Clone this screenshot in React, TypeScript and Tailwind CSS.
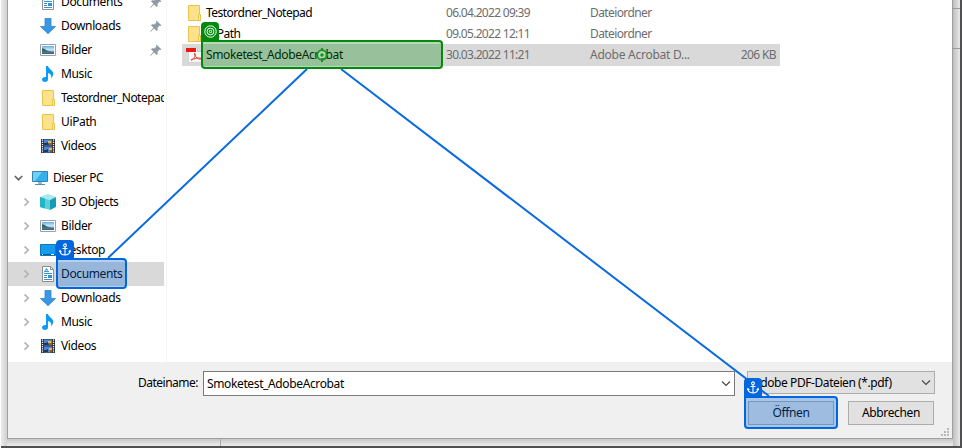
import type { ReactNode } from 'react';

const Folder = () => (
  <svg width="16" height="18" viewBox="0 0 16 18" className="shrink-0">
    <path d="M2.5 1.5h11v9h1v6h-12z" fill="#fde28b" stroke="#e9c44d" />
    <path d="M12.5 16.5v-6h2v6z" fill="#ffeaa0" stroke="#e9c44d" />
  </svg>
);
const Doc = () => (
  <svg width="16" height="16" viewBox="0 0 16 16" className="shrink-0">
    <path d="M2.5.5h8l3 3v12h-11z" fill="#fff" stroke="#8a8f91" />
    <path d="M10.5.5v3h3" fill="none" stroke="#8a8f91" />
    <path d="M5.500 3.500h2M5 5.500h4M4 7.500h8M4 9.500h3M4 13.500h8" stroke="#2f93d6" />
    <path d="m4 6.500 2.500-4L8 6.500" fill="none" stroke="#4ba3dc" />
    <path d="M8 9h4v3H8z" fill="#3a8fca" />
    <path d="M4 11.500h3" stroke="#777" />
  </svg>
);
const Download = () => (
  <svg width="16" height="16" viewBox="0 0 16 16" className="shrink-0">
    <path d="M5 .5h6v8h4.500L8 15.700.5 8.500H5z" fill="#3997e5" stroke="#2d83cf" strokeWidth=".8" />
  </svg>
);
const Picture = () => (
  <svg width="16" height="16" viewBox="0 0 16 16" className="shrink-0">
    <defs>
      <linearGradient id="sky" x1="0" y1="0" x2="0" y2="1">
        <stop offset="0" stopColor="#65a9ec" />
        <stop offset=".5" stopColor="#d6edf4" />
        <stop offset=".75" stopColor="#4f7f9e" />
        <stop offset="1" stopColor="#315b86" />
      </linearGradient>
    </defs>
    <path d="M.5 2.500h15v11H.5z" fill="#fff" stroke="#a0a0a0" />
    <path d="M2 4h12v8H2z" fill="url(#sky)" />
    <path d="M2 6q3 .5 5 2.500l5 1.300H2z" fill="#326a60" />
  </svg>
);
const Music = () => (
  <svg width="16" height="16" viewBox="0 0 16 16" className="shrink-0">
    <path d="M6 0h2c.5 3 5.300 4.300 5.300 7.500 0 1.700-.8 3.500-2.300 5 .8-3-.3-5-3-5.500v6.300C8 15.200 6.800 16 5 16s-3-1-3-2.500S3.400 11 5 11c.4 0 .7 0 1 .2z" fill="#0c9bf5" />
  </svg>
);
const Video = () => (
  <svg width="16" height="16" viewBox="0 0 16 16" className="shrink-0">
    <path d="M1 1h14v14H1z" fill="#303030" />
    <path d="M4 1.500h8v6H4zM4 8.500h8v6H4z" fill="#4b86dc" />
    <path d="M4 5h2l2-1 1 3H4zM4 12h2l2-1v3H4z" fill="#1f365e" />
    <path d="M8 3h3v2H8zM9 10h3v2H9z" fill="#e6c52b" />
    <path d="M10 5h2v2h-2zM10 12h2v2h-2z" fill="#a3552d" />
    <path d="M2.500 1.500v14M13.500 1.500v14" stroke="#fff" strokeWidth="1.200" strokeDasharray="1.200 1" />
  </svg>
);
const Monitor = () => (
  <svg width="16" height="16" viewBox="0 0 16 16" className="shrink-0">
    <path d="M.5 1.500h15v10H.5z" fill="#35b0ef" stroke="#3184ad" />
    <path d="M1 2h9L3 11H1z" fill="#73cef8" />
    <path d="M6 12h4v2H6z" fill="#9bb9c6" />
    <path d="M3 14.500h10" stroke="#5b8ea8" />
  </svg>
);
const Cube = () => (
  <svg width="16" height="16" viewBox="0 0 16 16" className="shrink-0">
    <path d="M0 3 8 0l8 3-6 3z" fill="#a4e9ee" />
    <path d="m0 3 10 3v10L0 13z" fill="#5fd0da" />
    <path d="m0 3 5 1.500v10L0 13z" fill="#24b4c8" />
    <path d="m10 6 6-3v10l-6 3z" fill="#159db4" />
  </svg>
);
const Desktop = () => (
  <svg width="16" height="16" viewBox="0 0 16 16" className="shrink-0">
    <path d="M.5 2.500h15v11H.5z" fill="#139bee" stroke="#0878bd" />
    <path d="M1 12.500h14" stroke="#075b93" />
    <path d="M2 12.500h1M11 12.500h3" stroke="#fff" />
  </svg>
);
const Pdf = () => (
  <svg width="16" height="18" viewBox="0 0 16 18" className="shrink-0">
    <path d="M2.500 1.500h9l4 4v11h-13z" fill="#f8f8f8" stroke="#d5d5d5" />
    <path d="M11.500 1.500v4h4" fill="#ddd" stroke="#c5c5c5" />
    <path d="M0 2h10v4H0z" fill="#e81b0c" />
    <path d="M5 14c4-1.500 5-5.500 4-6.500s-1 2 2 4.300 5 1.300 4 .5-7 .2-10 1.700" fill="none" stroke="#e23a2e" strokeWidth="1" />
  </svg>
);
const Pin = () => (
  <svg width="12" height="12" viewBox="0 0 12 12" className="shrink-0">
    <path d="m6.500.5 5 5-1.200.5-.8-.3-2 2 .2 2.300-1 .9-2.500-2.400L1 11.500l-.7.200.2-.7 3-3.200L1 5.300l1-1 2.400.2 2-2-.4-.8z" fill="#8f9ba3" />
  </svg>
);
const Chevron = ({ open }: { open?: boolean }) => (
  <svg width="10" height="10" viewBox="0 0 10 10" fill="none" className="shrink-0">
    {open ? (
      <path d="m.8 3 3.700 3.700L8.200 3" stroke="#686868" strokeWidth="1.700" />
    ) : (
      <path d="m2.500 1.300 3.700 3.700-3.700 3.700" stroke="#b3b3b3" strokeWidth="1.700" />
    )}
  </svg>
);
const Anchor = () => (
  <svg width="12" height="14" viewBox="0 0 12 14" fill="none" stroke="#fff" strokeWidth="1.100">
    <circle cx="6" cy="2.300" r="1.400" />
    <path d="M6 3.800V12M3.500 5.500h5M1 7.500v1C1 10.500 3.500 12 6 12s5-1.500 5-3.500v-1M.3 9 1 7.500 2.300 9M9.700 9 11 7.500l.7 1.500" />
  </svg>
);

type NavItem = { icon: ReactNode; label: string; narrow?: boolean; pinned?: boolean; selected?: boolean };

const quick: NavItem[] = [
  { icon: <Doc />, label: 'Documents', pinned: true },
  { icon: <Download />, label: 'Downloads', pinned: true },
  { icon: <Picture />, label: 'Bilder', pinned: true },
  { icon: <Music />, label: 'Music' },
  { icon: <Folder />, label: 'Testordner_Notepad', narrow: true },
  { icon: <Folder />, label: 'UiPath' },
  { icon: <Video />, label: 'Videos' },
];
const places: NavItem[] = [
  { icon: <Cube />, label: '3D Objects' },
  { icon: <Picture />, label: 'Bilder' },
  { icon: <Desktop />, label: 'Desktop' },
  { icon: <Doc />, label: 'Documents', selected: true },
  { icon: <Download />, label: 'Downloads' },
  { icon: <Music />, label: 'Music' },
  { icon: <Video />, label: 'Videos' },
];

function Sidebar() {
  return (
    <nav className="-mt-[10px] w-[156px] shrink-0 overflow-hidden">
      {quick.map((i) => (
        <div key={i.label} className="flex h-6 items-center pl-8">
          {i.icon}
          <span className={i.narrow ? 'ml-[5px] min-w-0 flex-1 overflow-hidden tracking-[-0.52px]' : 'ml-[5px] min-w-0 flex-1'}>{i.label}</span>
          {i.pinned && <span className="mr-[2px]"><Pin /></span>}
        </div>
      ))}
      <div className="mt-2 flex h-6 items-center pl-[6px]">
        <Chevron open />
        <span className="ml-2"><Monitor /></span>
        <span className="ml-[5px] tracking-[-0.44px]">Dieser PC</span>
      </div>
      {places.map((i) => (
        <div key={i.label} className={i.selected ? 'flex h-6 items-center bg-[#d9d9d9] pl-[14px]' : 'flex h-6 items-center pl-[14px]'}>
          <Chevron />
          <span className="ml-2">{i.icon}</span>
          <span className="ml-[5px]">{i.label}</span>
        </div>
      ))}
    </nav>
  );
}

const files = [
  { name: 'Testordner_Notepad', date: '06.04.2022 09:39', type: 'Dateiordner' },
  { name: 'UiPath', date: '09.05.2022 12:11', type: 'Dateiordner' },
  { name: 'Smoketest_AdobeAcrobat', date: '30.03.2022 11:21', type: 'Adobe Acrobat D...', size: '206 KB' },
];

function Files() {
  return (
    <main className="ml-[15px] w-[598px] pt-[2px]">
      {files.map((f) => (
        <div
          key={f.name}
          className={f.size ? 'flex h-[22px] items-center bg-[#d9d9d9] pr-1 pl-1' : 'flex h-[21px] items-center pr-1 pl-1'}
        >
          {f.size ? <Pdf /> : <Folder />}
          <span className={f.size ? 'ml-1 w-[240px]' : 'ml-1 w-[240px] tracking-[-0.52px]'}>{f.name}</span>
          <span className="w-36 tracking-[-0.7px] text-[#6d6d6d]">{f.date}</span>
          <span className={f.size ? 'flex-1 tracking-[-0.26px] text-[#6d6d6d]' : 'flex-1 tracking-[-0.6px] text-[#6d6d6d]'}>{f.type}</span>
          <span className="tracking-[-0.6px] text-[#6d6d6d]">{f.size}</span>
        </div>
      ))}
    </main>
  );
}

const DropArrow = () => (
  <svg width="10" height="6" viewBox="0 0 10 6" fill="none" stroke="#444" strokeWidth="1.100" className="shrink-0">
    <path d="M1 .5 5 4.500 9 .5" />
  </svg>
);

function Footer() {
  return (
    <footer className="relative flex h-[76px] bg-[#f0f0f0] pt-[9px]">
      <label className="ml-[130px] mt-[3px] w-[65px] tracking-[-0.5px]">Dateiname:</label>
      <div className="flex h-[25px] w-[532px] items-center justify-between border border-[#7a7a7a] bg-white pr-[3px] pl-[3px]">
        <span>Smoketest_AdobeAcrobat</span>
        <DropArrow />
      </div>
      <div className="ml-3 w-[188px]">
        <div className="flex h-[23px] items-center justify-between border border-[#adadad] bg-[#e1e1e1] pr-[3px] pl-[5px]">
          <span className="tracking-[-0.42px]">Adobe PDF-Dateien (*.pdf)</span>
          <DropArrow />
        </div>
        <div className="mt-[7px] flex justify-between pr-px pl-px">
          <div className="flex h-6 w-[86px] items-center justify-center border border-[#adadad] bg-[#e1e1e1]">Öffnen</div>
          <div className="flex h-6 w-[86px] items-center justify-center border border-[#adadad] bg-[#e1e1e1]">Abbrechen</div>
        </div>
      </div>
      <svg width="8" height="8" viewBox="0 0 8 8" className="absolute right-[3px] bottom-[2px]" fill="#b9b9b9">
        <path d="M6 0h2v2H6zM3 3h2v2H3zM6 3h2v2H6zM0 6h2v2H0zM3 6h2v2H3zM6 6h2v2H6z" />
      </svg>
    </footer>
  );
}

function Overlays() {
  return (
    <div className="pointer-events-none absolute inset-0">
      <svg width="962" height="448" className="absolute inset-0" fill="none" stroke="#0a6be0" strokeWidth="2">
        <path d="M307 69 108 258M341 69l428 327" />
      </svg>
      <div className="absolute top-[240px] left-[56px] flex h-5 w-[18px] justify-center rounded-t bg-[#0067df] pt-[3px]"><Anchor /></div>
      <div className="absolute top-[258px] left-[56px] h-[31px] w-[71px] rounded-[4px] rounded-tl-none border-2 border-[#0067df] bg-[#0067df]/30" />
      <div className="absolute top-[378px] left-[744px] flex h-5 w-[18px] justify-center rounded-t bg-[#0067df] pt-[3px]"><Anchor /></div>
      <div className="absolute top-[396px] left-[744px] h-[33px] w-[94px] rounded-[4px] rounded-tl-none border-2 border-[#0067df] bg-[#0067df]/30" />
      <div className="absolute top-[22px] left-[201px] flex h-5 w-[18px] justify-center rounded-t bg-[#038a0e] pt-[3px]">
        <svg width="13" height="13" viewBox="0 0 13 13" fill="none" stroke="#fff" strokeWidth="1">
          <circle cx="6.500" cy="6.500" r="5.700" />
          <circle cx="6.500" cy="6.500" r="3.400" />
          <circle cx="6.500" cy="6.500" r="1.200" />
        </svg>
      </div>
      <div className="absolute top-[40px] left-[201px] h-[29px] w-[242px] rounded-[4px] rounded-tl-none border-2 border-[#038a0e] bg-[#038a0e]/30" />
      <svg width="16" height="16" viewBox="0 0 16 16" className="absolute top-[47px] left-[314px]" fill="none">
        <circle cx="8" cy="8" r="3.600" fill="#b5d6b7" />
        <circle cx="8" cy="8" r="4.800" stroke="#159522" strokeWidth="1.800" />
        <path d="M8 1v3M8 12v3M2 8h1.500M12.500 8H14" stroke="#159522" strokeWidth="2" />
        <circle cx="8" cy="8" r="1.800" fill="#159522" />
      </svg>
    </div>
  );
}

export default function App() {
  return (
    <div className="relative flex h-[448px] w-[962px] overflow-hidden bg-white font-['Noto_Sans',sans-serif] text-[12px] leading-[18px] tracking-[-0.37px] whitespace-nowrap text-black">
      <div className="ml-px flex w-[961px] flex-col bg-[#505052]">
        <div className="flex h-[446px] shrink-0">
          <div className="w-[6px] shrink-0 bg-linear-to-r from-[#ebebeb] to-[#d2d2d2]" />
          <div className="w-[946px] shrink-0">
            <div className="flex h-[439px] flex-col border-x border-b border-[#9f9f9f] bg-white">
              <div className="flex h-[362px] shrink-0 overflow-hidden">
                <Sidebar />
                <div className="ml-[2px] w-px bg-[#f5f5f5]" />
                <Files />
              </div>
              <Footer />
            </div>
            <div className="h-[7px] bg-linear-to-b from-[#c8c8c8] to-[#eeeeee]">
              <div className="ml-[213px] h-full w-px bg-[#aaa]" />
            </div>
          </div>
          <div className="w-[7px] shrink-0 bg-linear-to-r from-[#bfbfbf] to-[#e9e9e9] pt-2">
            <div className="h-px bg-[#999]" />
            <div className="mt-[39px] h-px bg-[#999]" />
          </div>
        </div>
      </div>
      <Overlays />
    </div>
  );
}
